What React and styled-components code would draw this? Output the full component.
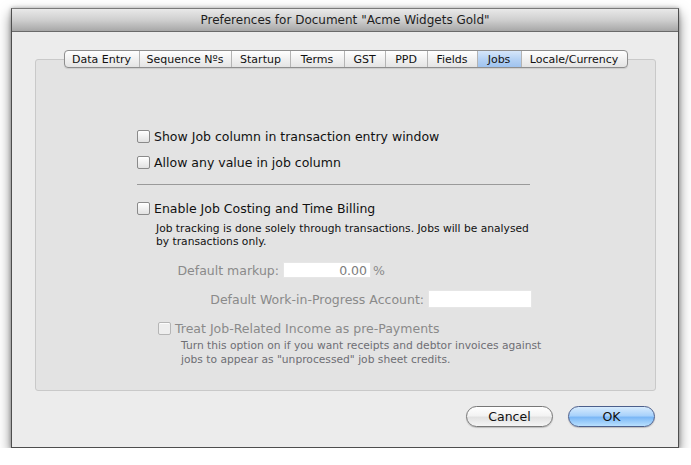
import styled, { createGlobalStyle } from "styled-components";

const GlobalStyle = createGlobalStyle`
  body {
    margin: 0;
    background: #ffffff;
    font-family: "DejaVu Sans", "Liberation Sans", sans-serif;
  }
`;

const Page = styled.div`
  padding: 8px 0 0 11px;
`;

const Window = styled.div`
  width: 668px;
  height: 440px;
  box-sizing: border-box;
  border: 1px solid #4e4e4e;
  border-top-color: #7a7a7a;
  background: #ececec;
  box-shadow: 0 6px 12px rgba(0, 0, 0, 0.5), 0 0 4px rgba(0, 0, 0, 0.3);
  display: flex;
  flex-direction: column;
`;

const TitleBar = styled.div`
  height: 22px;
  border-bottom: 1px solid #6a6a6a;
  background: linear-gradient(#e9e9e9, #cfcfcf 50%, #a7a7a7);
  display: flex;
  align-items: center;
  justify-content: center;
  font-size: 12px;
  color: #1e1e1e;
`;

const Body = styled.div`
  flex: 1;
  padding: 18px 22px 0 23px;
  display: flex;
  flex-direction: column;
`;

const TabStrip = styled.div`
  align-self: center;
  display: flex;
  height: 18px;
  box-sizing: border-box;
  border: 1px solid #8e8e8e;
  border-radius: 4px;
  background: linear-gradient(#ffffff, #f1f1f1 50%, #e4e4e4);
  position: relative;
  z-index: 1;
  overflow: hidden;
  box-shadow: 0 1px 1px rgba(0, 0, 0, 0.1);
`;

const Tab = styled.div`
  width: ${(p) => p.$w}px;
  box-sizing: border-box;
  display: flex;
  align-items: center;
  justify-content: center;
  font-size: 11px;
  color: #111;
  border-left: ${(p) => (p.$first ? "none" : "1px solid #b4b4b4")};
  background: ${(p) =>
    p.$active ? "linear-gradient(#d6e6fa, #b6d2f4 50%, #9fc3ef)" : "transparent"};
`;

const Panel = styled.div`
  margin-top: -9px;
  height: 332px;
  box-sizing: border-box;
  border: 1px solid #c9c9c9;
  border-radius: 3px;
  background: #e3e3e3;
  padding: 68px 0 0 101px;
  display: flex;
  flex-direction: column;
`;

const Row = styled.label`
  display: flex;
  align-items: center;
  height: 16px;
  gap: 4px;
  margin-top: ${(p) => p.$mt || 0}px;
  padding-left: ${(p) => p.$indent || 0}px;
  font-size: 12.5px;
  color: ${(p) => (p.$disabled ? "#8a8a8a" : "#111")};
`;

const Box = styled.span`
  width: 13px;
  height: 13px;
  flex: none;
  box-sizing: border-box;
  border: 1px solid ${(p) => (p.$disabled ? "#b5b5b5" : "#8a8a8a")};
  border-radius: 2px;
  background: ${(p) =>
    p.$disabled ? "#eeeeee" : "linear-gradient(#ffffff, #f0f0f0 50%, #e2e2e2)"};
  box-shadow: inset 0 1px 0 rgba(255, 255, 255, 0.8);
`;

const Separator = styled.div`
  width: 393px;
  height: 1px;
  background: #9a9a9a;
  margin-top: 14px;
`;

const Note = styled.div`
  width: 380px;
  margin-top: ${(p) => p.$mt || 0}px;
  padding-left: ${(p) => p.$indent || 0}px;
  font-size: 10.7px;
  line-height: ${(p) => p.$lh || 13}px;
  color: ${(p) => (p.$disabled ? "#6e6e74" : "#111")};
`;

const FieldRow = styled.div`
  display: flex;
  align-items: center;
  height: 18px;
  margin-top: ${(p) => p.$mt || 0}px;
  font-size: 12.5px;
  color: #8a8a8a;
`;

const FieldLabel = styled.span`
  width: ${(p) => p.$w}px;
  text-align: right;
  margin-right: 4px;
`;

const Field = styled.div`
  width: ${(p) => p.$w}px;
  height: ${(p) => p.$h || 16}px;
  box-sizing: border-box;
  background: #ffffff;
  border: 1px solid #e6e6e6;
  display: flex;
  align-items: center;
  justify-content: flex-end;
  padding-right: 3px;
  font-size: 12.5px;
  color: #7c7c7c;
`;

const Unit = styled.span`
  margin-left: 2px;
  font-size: 12.5px;
  color: #8a8a8a;
`;

const ButtonRow = styled.div`
  display: flex;
  justify-content: flex-end;
  gap: 15px;
  margin-top: 15px;
  padding-right: 1px;
`;

const Button = styled.div`
  width: 87px;
  height: 21px;
  box-sizing: border-box;
  border-radius: 11px;
  border: 1px solid ${(p) => (p.$primary ? "#4c5f8c" : "#777")};
  background: ${(p) =>
    p.$primary
      ? "linear-gradient(#d7ebfd, #a9d2fb 45%, #7cb8f6 55%, #b9e0fe)"
      : "linear-gradient(#ffffff, #f3f3f3 45%, #e2e2e2 55%, #f5f5f5)"};
  display: flex;
  align-items: center;
  justify-content: center;
  font-size: 12.5px;
  color: #111;
  box-shadow: 0 1px 1px rgba(0, 0, 0, 0.2);
`;

const tabs = [
  ["Data Entry", 74],
  ["Sequence Nºs", 92],
  ["Startup", 59],
  ["Terms", 54],
  ["GST", 41],
  ["PPD", 42],
  ["Fields", 50],
  ["Jobs", 44],
  ["Locale/Currency", 106],
];

function App() {
  return (
    <Page>
      <GlobalStyle />
      <Window>
        <TitleBar>Preferences for Document "Acme Widgets Gold"</TitleBar>
        <Body>
          <TabStrip>
            {tabs.map(([name, w], i) => (
              <Tab key={name} $w={w} $first={i === 0} $active={name === "Jobs"}>
                {name}
              </Tab>
            ))}
          </TabStrip>
          <Panel>
            <Row>
              <Box />
              Show Job column in transaction entry window
            </Row>
            <Row $mt={10}>
              <Box />
              Allow any value in job column
            </Row>
            <Separator />
            <Row $mt={15}>
              <Box />
              Enable Job Costing and Time Billing
            </Row>
            <Note $mt={6} $indent={19}>
              Job tracking is done solely through transactions. Jobs will be analysed
              by transactions only.
            </Note>
            <FieldRow $mt={13}>
              <FieldLabel $w={142}>Default markup:</FieldLabel>
              <Field $w={88}>0.00</Field>
              <Unit>%</Unit>
            </FieldRow>
            <FieldRow $mt={11}>
              <FieldLabel $w={287}>Default Work-in-Progress Account:</FieldLabel>
              <Field $w={104} $h={18} />
            </FieldRow>
            <Row $mt={12} $indent={21} $disabled>
              <Box $disabled />
              Treat Job-Related Income as pre-Payments
            </Row>
            <Note $mt={3} $indent={44} $lh={14} $disabled>
              Turn this option on if you want receipts and debtor invoices against
              jobs to appear as "unprocessed" job sheet credits.
            </Note>
          </Panel>
          <ButtonRow>
            <Button>Cancel</Button>
            <Button $primary>OK</Button>
          </ButtonRow>
        </Body>
      </Window>
    </Page>
  );
}

export default App;
